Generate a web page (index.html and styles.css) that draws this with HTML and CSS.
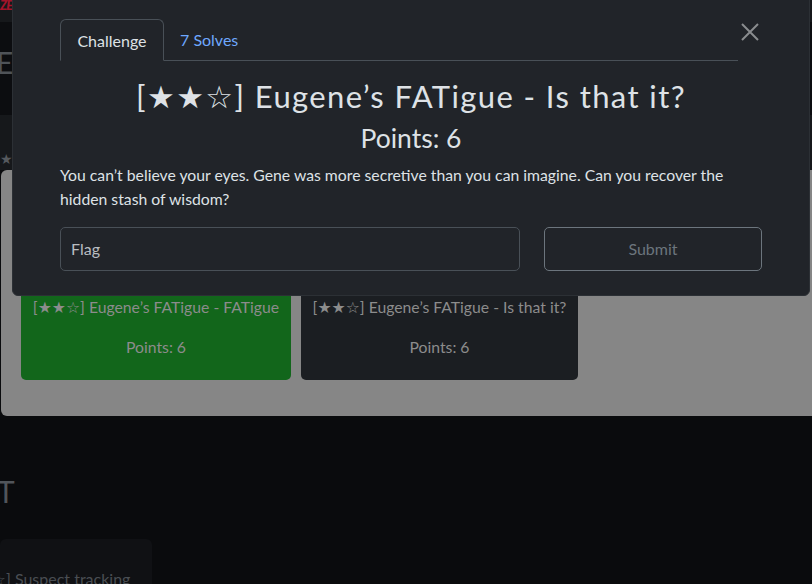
FILE: index.html
```html
<!DOCTYPE html>
<html lang="en">
<head>
<meta charset="utf-8">
<title>Challenge</title>
<link rel="stylesheet" href="styles.css">
</head>
<body>
<div class="page">
  <div class="topbar"><span class="logo">ZE</span></div>
  <div class="jumbo"><span class="jumbo-title">E</span></div>
  <div class="cat-strip"><span class="cat-star">★</span></div>
  <div class="panel">
    <div class="card card-solved">
      <div class="card-name">[★★☆] Eugene’s FATigue - FATigue</div>
      <div class="card-points">Points: 6</div>
    </div>
    <div class="card card-open">
      <div class="card-name">[★★☆] Eugene’s FATigue - Is that it?</div>
      <div class="card-points">Points: 6</div>
    </div>
  </div>
  <div class="section-head">T</div>
  <div class="bottom-card"><span class="bottom-name">[★★☆] Suspect tracking</span></div>
</div>

<div class="modal">
  <button class="close" aria-label="Close">
    <svg width="18" height="18" viewBox="0 0 18 18"><path d="M1 1 L17 17 M17 1 L1 17" stroke="#8a8c8f" stroke-width="2" fill="none"/></svg>
  </button>
  <nav class="tabs">
    <span class="tab active">Challenge</span>
    <span class="tab link">7 Solves</span>
  </nav>
  <h2 class="title">[★★☆] Eugene’s FATigue - Is that it?</h2>
  <h3 class="points">Points: 6</h3>
  <p class="desc">You can’t believe your eyes. Gene was more secretive than you can imagine. Can you recover the hidden stash of wisdom?</p>
  <div class="form-row">
    <input class="flag" type="text" placeholder="Flag">
    <button class="submit">Submit</button>
  </div>
</div>
</body>
</html>
```
FILE: styles.css
```css
* { box-sizing: border-box; }
html, body {
  margin: 0;
  padding: 0;
  width: 812px;
  height: 584px;
  overflow: hidden;
  background: #0a0b0d;
  font-family: Lato, "Noto Sans", "DejaVu Sans", sans-serif;
}
.page {
  display: flex;
  flex-direction: column;
  width: 812px;
}
.topbar {
  height: 22px;
  background: #16181b;
  overflow: hidden;
  white-space: nowrap;
}
.logo {
  display: block;
  color: #a3142a;
  font-weight: 900;
  font-style: italic;
  font-size: 13px;
  line-height: 10px;
  letter-spacing: -1px;
}
.jumbo {
  height: 93px;
  background: #0c0d10;
  display: flex;
  align-items: center;
  overflow: hidden;
}
.jumbo-title {
  color: #4f5358;
  font-size: 30px;
  line-height: 30px;
  margin-left: -4px;
  margin-top: -14px;
}
.cat-strip {
  height: 55px;
  background: #16181b;
  display: flex;
  align-items: flex-end;
}
.cat-star {
  color: #55595e;
  font-family: "DejaVu Sans", sans-serif;
  font-size: 14px;
  line-height: 14px;
  margin-bottom: 4px;
}
.panel {
  margin-left: 1px;
  width: 840px;
  height: 246px;
  background: #868686;
  border-radius: 6px;
  display: flex;
  align-items: flex-end;
  gap: 10px;
  padding: 0 20px 36px 20px;
}
.card {
  height: 130px;
  border-radius: 5px;
  display: flex;
  flex-direction: column;
  justify-content: flex-end;
  align-items: center;
  padding: 0 8px 21px;
  font-size: 15.75px;
  color: #8c8c8c;
}
.card-solved { width: 270px; background: #12661b; }
.card-open { width: 277px; background: #1b1e22; }
.card-name { line-height: 24px; white-space: nowrap; }
.card-points { line-height: 24px; margin-top: 16px; }
.section-head {
  margin-top: 60px;
  color: #51555a;
  font-size: 30px;
  line-height: 30px;
  margin-left: -3px;
}
.bottom-card {
  margin-top: 33px;
  width: 152px;
  height: 60px;
  background: #101114;
  border-radius: 6px;
  overflow: hidden;
  white-space: nowrap;
  padding-top: 30px;
}
.bottom-name {
  display: block;
  color: #4a4e53;
  font-size: 16px;
  margin-left: -42px;
}

.modal {
  position: absolute;
  left: 12px;
  top: -12px;
  width: 798px;
  background: #212429;
  border: 1px solid #2c3035;
  border-radius: 6px;
  padding: 30px 47px 24px 47px;
  color: #dee2e6;
}
.close {
  position: absolute;
  left: 728px;
  top: 34px;
  width: 18px;
  height: 18px;
  padding: 0;
  border: 0;
  background: none;
  line-height: 0;
}
.tabs {
  display: flex;
  margin-right: 24px;
  border-bottom: 1px solid #495057;
  height: 42px;
}
.tab {
  font-size: 16px;
  line-height: 24px;
  padding: 9px 16px;
  height: 42px;
}
.tab.active {
  border: 1px solid #495057;
  border-bottom-color: #212429;
  border-radius: 6px 6px 0 0;
  color: #dee2e6;
  background: #212429;
  width: 104px;
  padding: 9px 0;
  text-align: center;
}
.tab.link { color: #6ea8fe; }
.title {
  margin: 16px -36px 0;
  text-align: center;
  font-weight: 400;
  font-size: 31px;
  line-height: 38px;
  letter-spacing: 1.4px;
  color: #dee2e6;
}
.points {
  margin: 7px 0 0;
  text-align: center;
  font-weight: 400;
  font-size: 26.5px;
  line-height: 32px;
  color: #dee2e6;
}
.desc {
  margin: 9px 0 0;
  font-size: 15.75px;
  line-height: 24px;
  color: #dee2e6;
}
.form-row {
  display: flex;
  gap: 24px;
  margin-top: 16px;
}
.flag {
  width: 460px;
  height: 44px;
  background: #212429;
  border: 1px solid #495057;
  border-radius: 5px;
  padding: 0 10px 2px;
  font-family: inherit;
  font-size: 16px;
  color: #dee2e6;
}
.flag::placeholder { color: #b9bdc1; }
.submit {
  width: 218px;
  height: 44px;
  background: transparent;
  border: 1px solid #6c757d;
  border-radius: 5px;
  font-family: inherit;
  font-size: 16px;
  padding-bottom: 2px;
  color: #6c757d;
}
```
